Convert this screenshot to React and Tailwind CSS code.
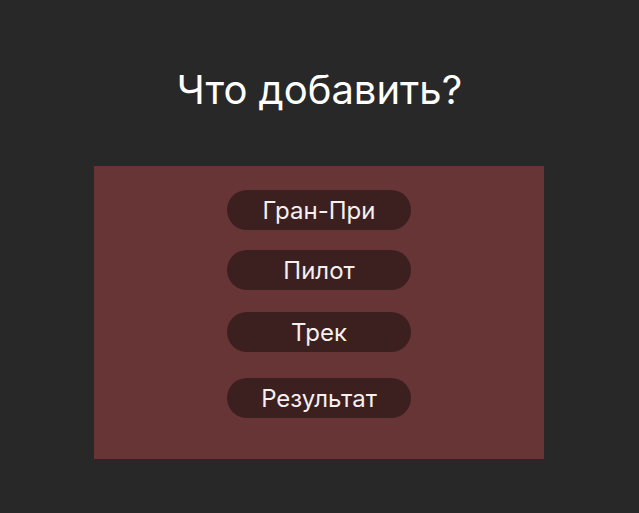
import React from 'react';

const items = [
  { label: 'Гран-При', gap: 'mt-0' },
  { label: 'Пилот', gap: 'mt-[20px]' },
  { label: 'Трек', gap: 'mt-[22px]' },
  { label: 'Результат', gap: 'mt-[26px]' },
];

const App = () => {
  return (
    <div
      className="min-h-[513px] w-full bg-[#282828] flex flex-col items-center pt-[70px]"
      style={{ fontFamily: 'Inter, "Noto Sans", sans-serif' }}
    >
      <h1 className="text-[40px] leading-[40px] text-white font-normal">Что добавить?</h1>

      <div className="mt-[56px] mr-[1px] w-[450px] h-[293px] bg-[#673535] flex flex-col items-center pt-[24px]">
        {items.map((item) => (
          <button
            key={item.label}
            className={`${item.gap} w-[184px] h-[40px] rounded-full bg-[#3c1f1f] text-[#f5f0f0] text-[24px] leading-none flex items-center justify-center pt-[2px]`}
          >
            {item.label}
          </button>
        ))}
      </div>
    </div>
  );
};

export default App;
